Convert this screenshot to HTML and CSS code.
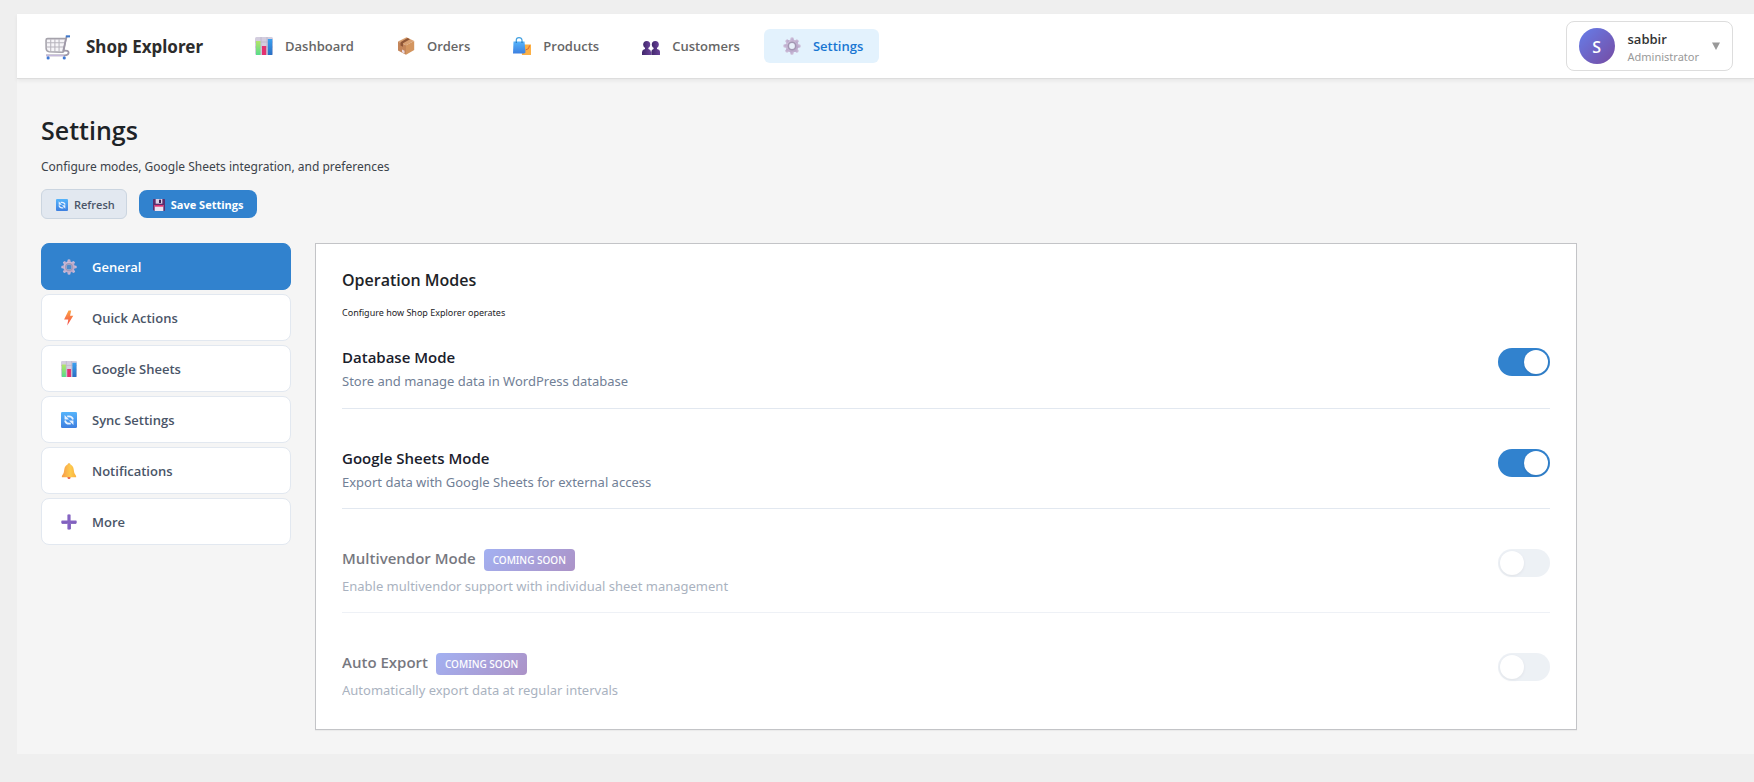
FILE: index.html
```html
<!DOCTYPE html>
<html lang="en">
<head>
<meta charset="utf-8">
<title>Shop Explorer – Settings</title>
<link rel="stylesheet" href="styles.css">
</head>
<body>
<svg class="sprite" aria-hidden="true">
  <defs>
    <linearGradient id="g-blue" x1="0" y1="0" x2="0" y2="1"><stop offset="0" stop-color="#55b4fb"/><stop offset="1" stop-color="#3d7fe0"/></linearGradient>
    <linearGradient id="g-green" x1="0" y1="0" x2="0" y2="1"><stop offset="0" stop-color="#b4e468"/><stop offset="1" stop-color="#57dc8c"/></linearGradient>
    <linearGradient id="g-bar" x1="0" y1="0" x2="0" y2="1"><stop offset="0" stop-color="#3aa0f0"/><stop offset="1" stop-color="#2a6fc4"/></linearGradient>
    <linearGradient id="g-bolt" x1="0" y1="0" x2="0" y2="1"><stop offset="0" stop-color="#fba545"/><stop offset="1" stop-color="#f4484a"/></linearGradient>
    <linearGradient id="g-gear" x1="0" y1="0" x2="1" y2="1"><stop offset="0" stop-color="#d6c8df"/><stop offset="1" stop-color="#b3a0c6"/></linearGradient>
    <linearGradient id="g-bell" x1="0" y1="0" x2="1" y2="0"><stop offset="0" stop-color="#f79a4a"/><stop offset=".6" stop-color="#fdcb4e"/><stop offset="1" stop-color="#fbb03f"/></linearGradient>
    <linearGradient id="g-people" x1="0" y1="0" x2="1" y2="0"><stop offset="0" stop-color="#40276b"/><stop offset="1" stop-color="#6a4399"/></linearGradient>
    <symbol id="i-cart" viewBox="0 0 24 24">
      <path d="M1 5Q1 3.500 2.500 3.500H20L18 15.500Q17.800 16.800 16 16.500L4 16Q1.200 15.800 1.100 13Z" fill="#f6f5f8" stroke="#a5a2ab" stroke-width="1.500"/>
      <path d="M5.500 4v12M9.500 4v12M13.500 4v12M1.500 7.500H19M1.500 11.500H18.500" stroke="#b6b4bc" stroke-width="1" fill="none"/>
      <path d="M20.800 1.500 17.500 15Q22.700 14.500 22.700 17 22.500 19.500 19 19.500H1" stroke="#9f99a8" stroke-width="1.700" fill="none"/>
      <path d="M1 19.700H18" stroke="#c5b8dc" stroke-width="1.200"/>
      <path d="M20 1.300h4" stroke="#3f78c9" stroke-width="2"/>
      <circle cx="3" cy="22" r="1.500" fill="#3f78d4"/><circle cx="18.500" cy="22" r="1.500" fill="#3f78d4"/>
    </symbol>
    <symbol id="i-chart" viewBox="0 0 18 18">
      <rect width="18" height="18" rx="1.500" fill="#d3cdde"/>
      <path d="M0 5h18M0 10h18M6 0v18M12 0v18" stroke="#bcb4ca" stroke-width=".8"/>
      <rect x="1" y="4" width="4.500" height="14" fill="url(#g-green)"/>
      <rect x="7" y="9" width="4.200" height="9" fill="#e3316f"/>
      <rect x="12.800" y="2" width="4.500" height="16" fill="url(#g-bar)"/>
    </symbol>
    <symbol id="i-box" viewBox="0 0 18 18">
      <path d="M9.500 .3 17.200 4 9 8.200 1 4.500Z" fill="#d9a071"/>
      <path d="M1 4.500 9 8.200V17.800L1 13.500Z" fill="#c48559"/>
      <path d="M17.200 4 9 8.200V17.800L17.200 13Z" fill="#d3955f"/>
      <path d="M10.500 1 13 2.200 6 6.200V9.800L3.500 8.500V5.200Z" fill="#8f5636"/>
      <path d="M5 12.500 7.500 13.800V16.500L5 15.200Z" fill="#ead9e2"/>
    </symbol>
    <symbol id="i-bags" viewBox="0 0 18 18">
      <path d="M8 7.500H18V18H9Z" fill="#fdb045"/>
      <path d="M12.500 13Q16.300 12.500 16.600 8.500" fill="none" stroke="#d9663c" stroke-width="1"/>
      <path d="M3.300 6V3Q3.300.6 6 .6T9 3V6" fill="none" stroke="#45a1e0" stroke-width="1.200"/>
      <path d="M.5 4.500H11.500L12.500 15.500 11 16.500H0Z" fill="url(#g-blue)"/>
      <path d="M3.300 6V4.500M9 6V4.500" stroke="#2c78b8" stroke-width="1.200"/>
    </symbol>
    <symbol id="i-people" viewBox="0 0 18 18">
      <g fill="url(#g-people)"><circle cx="4.700" cy="7.600" r="3.500"/><circle cx="13.300" cy="7.600" r="3.500"/>
      <path d="M3 9.500h3.400v2.500Q9 12.600 9 15v3H0v-3Q.2 12.600 3 12Z"/><path d="M11.600 9.500h3.400v2.500Q18 12.600 18 15v3H9.300v-3Q9.300 12.600 11.600 12Z"/></g>
    </symbol>
    <symbol id="i-gear" viewBox="0 0 18 18">
      <g fill="url(#g-gear)"><circle cx="9" cy="9" r="6.500"/>
      <path id="tooth" d="M7.200 3.500 7.500.8Q9-.2 10.500.8L10.800 3.500Z"/>
      <use href="#tooth" transform="rotate(45 9 9)"/><use href="#tooth" transform="rotate(90 9 9)"/><use href="#tooth" transform="rotate(135 9 9)"/><use href="#tooth" transform="rotate(180 9 9)"/><use href="#tooth" transform="rotate(225 9 9)"/><use href="#tooth" transform="rotate(270 9 9)"/><use href="#tooth" transform="rotate(315 9 9)"/></g>
      <circle cx="9" cy="9" r="3.700" fill="#e8f0fa" stroke="#a397b3" stroke-width="1.600"/>
    </symbol>
    <symbol id="i-gear-blue" viewBox="0 0 18 18">
      <use href="#i-gear"/><circle cx="9" cy="9" r="2.900" fill="#4f8aca"/>
    </symbol>
    <symbol id="i-sync" viewBox="0 0 18 18">
      <rect width="18" height="18" rx="1.500" fill="url(#g-blue)"/>
      <path d="M13.500 8.500Q12.500 5 9 5H7" fill="none" stroke="#e8f2ff" stroke-width="2"/>
      <path d="M4 3.500V8.500H9Z" fill="#e8f2ff"/>
      <path d="M4.500 9.500Q5.500 13.200 9 13.200H11" fill="none" stroke="#e8f2ff" stroke-width="2"/>
      <path d="M14 14.500V9.500H9Z" fill="#e8f2ff"/>
    </symbol>
    <symbol id="i-bolt" viewBox="0 0 18 18">
      <path d="M8.500 .5H11.500L10.200 6.500H13.800L7 17.500 8.200 10.800H3.500Z" fill="url(#g-bolt)"/>
    </symbol>
    <symbol id="i-bell" viewBox="0 0 18 18">
      <circle cx="9" cy="16.300" r="1.700" fill="#e8574a"/><circle cx="9" cy="1.800" r="1.500" fill="#f5b143"/>
      <path d="M9 1.500Q14 2 14.400 8 14.500 12.500 17 14.500V16H1V14.500Q3.500 12.500 3.600 8 4 2 9 1.500Z" fill="url(#g-bell)"/>
    </symbol>
    <symbol id="i-plus" viewBox="0 0 18 18">
      <path d="M7.200 .8Q9-.3 10.800 .8V7.200H17.200Q18.300 9 17.200 10.800H10.800V17.200Q9 18.300 7.200 17.200V10.800H.8Q-.3 9 .8 7.200H7.200Z" fill="#8564c2"/>
      <path d="M7 10.500H1M11 10.500H17M10.500 11V17" stroke="#6445ad" stroke-width=".8"/>
    </symbol>
    <symbol id="i-disk" viewBox="0 0 18 18">
      <path d="M0 1Q0 0 1 0H17Q18 0 18 1V17Q18 18 17 18H2L0 16Z" fill="#5b2d6d"/>
      <rect x="4" width="10" height="7" fill="#d9cfe6"/><rect x="9" y="1" width="3" height="5" fill="#3b2254"/>
      <rect x="2.500" y="9" width="13" height="9" fill="#ece4f2"/><rect x="2.500" y="9" width="13" height="2.500" fill="#e3316f"/>
    </symbol>
  </defs>
</svg>
<div class="app">
  <header class="topbar">
    <div class="brand"><svg class="brand-icon" aria-hidden="true"><use href="#i-cart"/></svg><span>Shop Explorer</span></div>
    <nav class="nav" aria-label="Main">
      <a class="nav-link" href="#dashboard"><svg class="nav-icon" aria-hidden="true"><use href="#i-chart"/></svg>Dashboard</a>
      <a class="nav-link" href="#orders"><svg class="nav-icon" aria-hidden="true"><use href="#i-box"/></svg>Orders</a>
      <a class="nav-link" href="#products"><svg class="nav-icon" aria-hidden="true"><use href="#i-bags"/></svg>Products</a>
      <a class="nav-link" href="#customers"><svg class="nav-icon" aria-hidden="true"><use href="#i-people"/></svg>Customers</a>
      <a class="nav-link active" href="#settings" aria-current="page"><svg class="nav-icon" aria-hidden="true"><use href="#i-gear"/></svg>Settings</a>
    </nav>
    <button class="user" type="button">
      <span class="avatar">S</span>
      <span class="user-info"><span class="user-name">sabbir</span><span class="user-role">Administrator</span></span>
      <svg class="caret" viewBox="0 0 8 8" aria-hidden="true"><path d="M0 0.500H8L4 8Z" fill="#999"/></svg>
    </button>
  </header>
  <main class="content">
    <h1 class="title">Settings</h1>
    <p class="subtitle">Configure modes, Google Sheets integration, and preferences</p>
    <div class="actions">
      <button class="btn btn-refresh" type="button"><svg class="btn-icon" aria-hidden="true"><use href="#i-sync"/></svg>Refresh</button>
      <button class="btn btn-save" type="button"><svg class="btn-icon" aria-hidden="true"><use href="#i-disk"/></svg>Save Settings</button>
    </div>
    <div class="layout">
      <nav class="tabs" aria-label="Settings sections">
        <button class="tab active" type="button"><svg class="tab-icon" aria-hidden="true"><use href="#i-gear-blue"/></svg>General</button>
        <button class="tab" type="button"><svg class="tab-icon" aria-hidden="true"><use href="#i-bolt"/></svg>Quick Actions</button>
        <button class="tab" type="button"><svg class="tab-icon" aria-hidden="true"><use href="#i-chart"/></svg>Google Sheets</button>
        <button class="tab" type="button"><svg class="tab-icon" aria-hidden="true"><use href="#i-sync"/></svg>Sync Settings</button>
        <button class="tab" type="button"><svg class="tab-icon" aria-hidden="true"><use href="#i-bell"/></svg>Notifications</button>
        <button class="tab" type="button"><svg class="tab-icon" aria-hidden="true"><use href="#i-plus"/></svg>More</button>
      </nav>
      <section class="card">
        <h2 class="card-title">Operation Modes</h2>
        <p class="card-note">Configure how Shop Explorer operates</p>
        <div class="mode">
          <div><label class="mode-title" for="m-db">Database Mode</label><p class="mode-text">Store and manage data in WordPress database</p></div>
          <input class="toggle" type="checkbox" id="m-db" checked>
        </div>
        <div class="mode">
          <div><label class="mode-title" for="m-gs">Google Sheets Mode</label><p class="mode-text">Export data with Google Sheets for external access</p></div>
          <input class="toggle" type="checkbox" id="m-gs" checked>
        </div>
        <div class="mode soon">
          <div><label class="mode-title" for="m-mv">Multivendor Mode <span class="badge">COMING SOON</span></label><p class="mode-text">Enable multivendor support with individual sheet management</p></div>
          <input class="toggle" type="checkbox" id="m-mv" disabled>
        </div>
        <div class="mode soon">
          <div><label class="mode-title" for="m-ae">Auto Export <span class="badge">COMING SOON</span></label><p class="mode-text">Automatically export data at regular intervals</p></div>
          <input class="toggle" type="checkbox" id="m-ae" disabled>
        </div>
      </section>
    </div>
  </main>
</div>
</body>
</html>
```
FILE: styles.css
```css
* { box-sizing: border-box; }
body {
  margin: 0;
  padding: 14px 0 28px 17px;
  background: #efefef;
  color: #3c434a;
  font: 400 13px/20px "Noto Sans", "Open Sans", sans-serif;
}
h1, h2, p { margin: 0; }
button { font: inherit; cursor: pointer; }
.sprite { position: absolute; width: 0; height: 0; }

.title, .nav-link, .user-name, .avatar, .btn, .tab, .card-title, .mode-title {
  font-family: "Open Sans", "Noto Sans", sans-serif;
  font-weight: 600;
}

.app { background: #f5f5f5; }
.topbar {
  display: flex;
  align-items: center;
  height: 65px;
  padding: 0 21px 0 28px;
  background: #fff;
  border-bottom: 1px solid #ddd;
  box-shadow: 0 2px 4px rgba(0, 0, 0, .06);
}
.brand {
  display: flex;
  align-items: center;
  gap: 16px;
  padding-top: 2px;
  color: #2c2c2c;
  font-size: 17px;
  font-weight: 700;
}
.brand-icon { width: 25px; height: 25px; }
.nav { display: flex; gap: 8px; margin-left: 33px; }
.nav-link {
  display: flex;
  align-items: center;
  gap: 12px;
  height: 34px;
  padding: 0 16px 0 19px;
  border-radius: 6px;
  color: #666;
  text-decoration: none;
}
.nav-link.active { background: #e3f2fd; color: #1976d2; }
.nav-icon { width: 18px; height: 18px; }
.user {
  display: flex;
  align-items: center;
  gap: 13px;
  height: 50px;
  margin-left: auto;
  padding: 0 12px;
  border: 1px solid #ddd;
  border-radius: 8px;
  background: #fff;
  text-align: left;
}
.avatar {
  width: 36px;
  height: 36px;
  border-radius: 50%;
  background: linear-gradient(135deg, #667eea, #764ba2);
  color: #fff;
  font-size: 16px;
  line-height: 38px;
  text-align: center;
}
.user-info { display: flex; flex-direction: column; padding-top: 3px; line-height: 17px; }
.user-name { color: #333; }
.user-role { color: #999; font-size: 11px; }
.caret { width: 8px; height: 8px; }

.content { padding: 35px 24px 24px; }
.title {
  color: #1d2327;
  font-size: 25px;
  line-height: 32px;
}
.subtitle { margin-top: 11px; font-size: 12px; }
.actions { display: flex; align-items: center; gap: 12px; margin: 12px 0 24px; }
.btn {
  display: flex;
  align-items: center;
  gap: 6px;
  border-radius: 8px;
  font-size: 11px;
}
.btn-icon { width: 12px; height: 12px; }
.btn-refresh {
  height: 30px;
  padding: 1px 11px 0 14px;
  border: 1px solid #cbd5e0;
  border-radius: 6px;
  background: #e2e8f0;
  color: #4a5568;
}
.btn-save {
  height: 28px;
  padding: 1px 14px 0;
  border: 0;
  background: #3182ce;
  color: #fff;
  font-weight: 700;
}

.layout {
  display: grid;
  grid-template-columns: 250px 1fr;
  gap: 24px;
  max-width: 1536px;
}
.tabs { display: flex; flex-direction: column; gap: 4px; }
.tab {
  display: flex;
  align-items: center;
  gap: 15px;
  height: 47px;
  padding: 0 19px;
  border: 1px solid #e2e8f0;
  border-radius: 8px;
  background: #fff;
  color: #4a5568;
}
.tab.active { border-color: #3182ce; background: #3182ce; color: #fff; }
.tab-icon { width: 16px; height: 16px; }

.card {
  padding: 26px;
  border: 1px solid #c3c4c7;
  background: #fff;
  box-shadow: 0 1px 1px rgba(0, 0, 0, .04);
}
.card-title { color: #1d2327; font-size: 16px; line-height: 20px; }
.card-note { margin-top: 15px; color: #1d2327; font-size: 9px; line-height: 16px; }
.mode {
  display: flex;
  align-items: flex-start;
  justify-content: space-between;
  padding: 40px 0 16px;
  border-bottom: 1px solid #e2e8f0;
}
.card-note + .mode { padding: 27px 0 17px; }
.mode:last-child { padding-bottom: 3px; border-bottom: 0; }
.mode-title {
  display: flex;
  align-items: flex-start;
  gap: 8px;
  color: #1a202c;
  font-size: 15px;
  line-height: 18px;
}
.mode-text { margin-top: 5px; color: #718096; }
.soon { border-bottom-color: #eef1f6; }
.soon > * { opacity: .6; }
.badge {
  padding: 0 9px;
  border-radius: 4px;
  background: linear-gradient(135deg, #667eea, #764ba2);
  color: #fff;
  font: 500 10px/22px "Noto Sans", "Open Sans", sans-serif;
}
.toggle {
  flex: none;
  width: 52px;
  height: 28px;
  margin: 0;
  padding: 2px;
  border-radius: 14px;
  background: #e2e8f0;
  appearance: none;
}
.toggle::before {
  content: "";
  display: block;
  width: 24px;
  height: 24px;
  border-radius: 50%;
  background: #fff;
  box-shadow: 0 1px 3px rgba(0, 0, 0, .1);
}
.toggle:checked { background: #3182ce; }
.toggle:checked::before { margin-left: auto; }
```
